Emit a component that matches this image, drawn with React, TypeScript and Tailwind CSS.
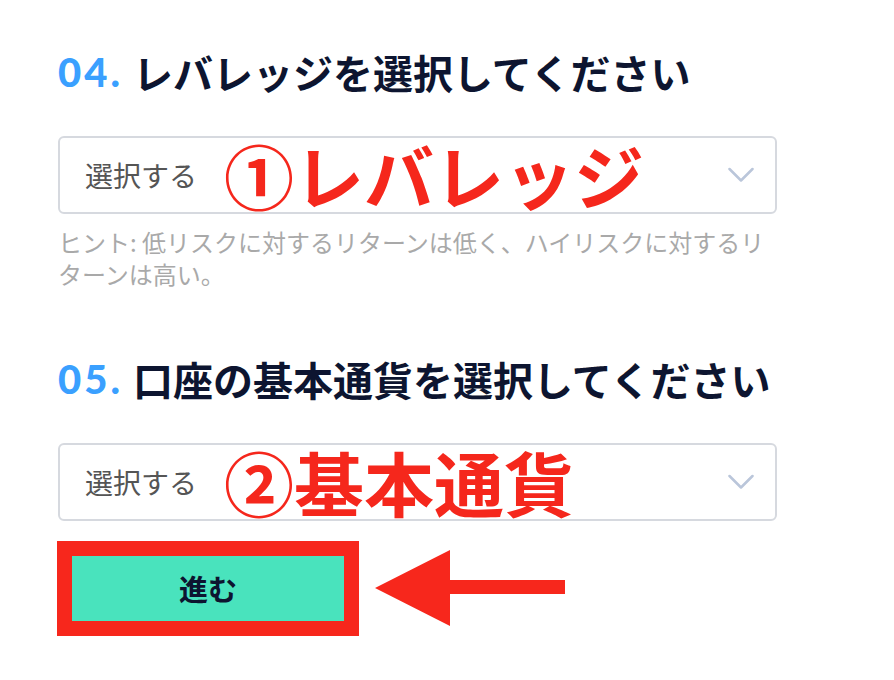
import React from 'react';

const JP = '[font-family:"Noto_Sans_CJK_JP","Noto_Sans",sans-serif]';

const Chevron = () => (
  <svg width="26" height="16" viewBox="0 0 26 16" fill="none" className="shrink-0">
    <path d="M1.5 2 L13 13.5 L24.5 2" stroke="#bac6da" strokeWidth="2.5" strokeLinecap="round" strokeLinejoin="round" />
  </svg>
);

const StepHeading = ({ num, label }: { num: string; label: string }) => (
  <h2 className="flex items-center h-[48px] whitespace-nowrap">
    <span className='[font-family:"Lato","Liberation_Sans",sans-serif] font-black text-[40px] text-[#3aa0ff] tracking-[3px]'>{num}</span>
    <span className={`${JP} font-bold text-[40px] text-[#0d1530] ml-[10px]`}>{label}</span>
  </h2>
);

// select with the red annotation drawn over it
const SelectBox = ({ note }: { note: string }) => (
  <div className="relative mt-[40px] h-[78px] w-[719px] rounded-[6px] border-2 border-[#d6d9df] bg-white flex items-center justify-between pl-[25px] pr-[21px]">
    <span className={`${JP} text-[28px] text-[#555555]`}>選択する</span>
    <Chevron />
    <span className={`${JP} absolute left-[164px] top-1/2 -translate-y-1/2 font-bold text-[70px] leading-none text-[#f5271c] whitespace-nowrap`}>
      {note}
    </span>
  </div>
);

export default function App() {
  return (
    <div className="min-h-[680px] w-[894px] bg-white pl-[58px] pt-[48px]">
      <StepHeading num="04." label="レバレッジを選択してください" />
      <SelectBox note="①レバレッジ" />
      <p className={`${JP} mt-[12px] w-[720px] text-[24px] leading-[32px] text-[#a9a9a9]`}>
        ヒント: 低リスクに対するリターンは低く、ハイリスクに対するリターンは高い。
      </p>

      <div className="mt-[65px]">
        <StepHeading num="05." label="口座の基本通貨を選択してください" />
      </div>
      <SelectBox note="②基本通貨" />

      <div className="mt-[20px] -ml-px flex items-center">
        <div className="border-[15px] border-[#f7271c]">
          <button className={`${JP} w-[272px] h-[65px] bg-[#49e3bd] font-bold text-[29px] text-[#0d1530]`}>
            進む
          </button>
        </div>
        <svg width="192" height="78" viewBox="0 0 192 78" className="ml-[16px]">
          <polygon points="0,38 75,0 75,30 190,30 190,44 75,44 75,76" fill="#f7271c" />
        </svg>
      </div>
    </div>
  );
}
